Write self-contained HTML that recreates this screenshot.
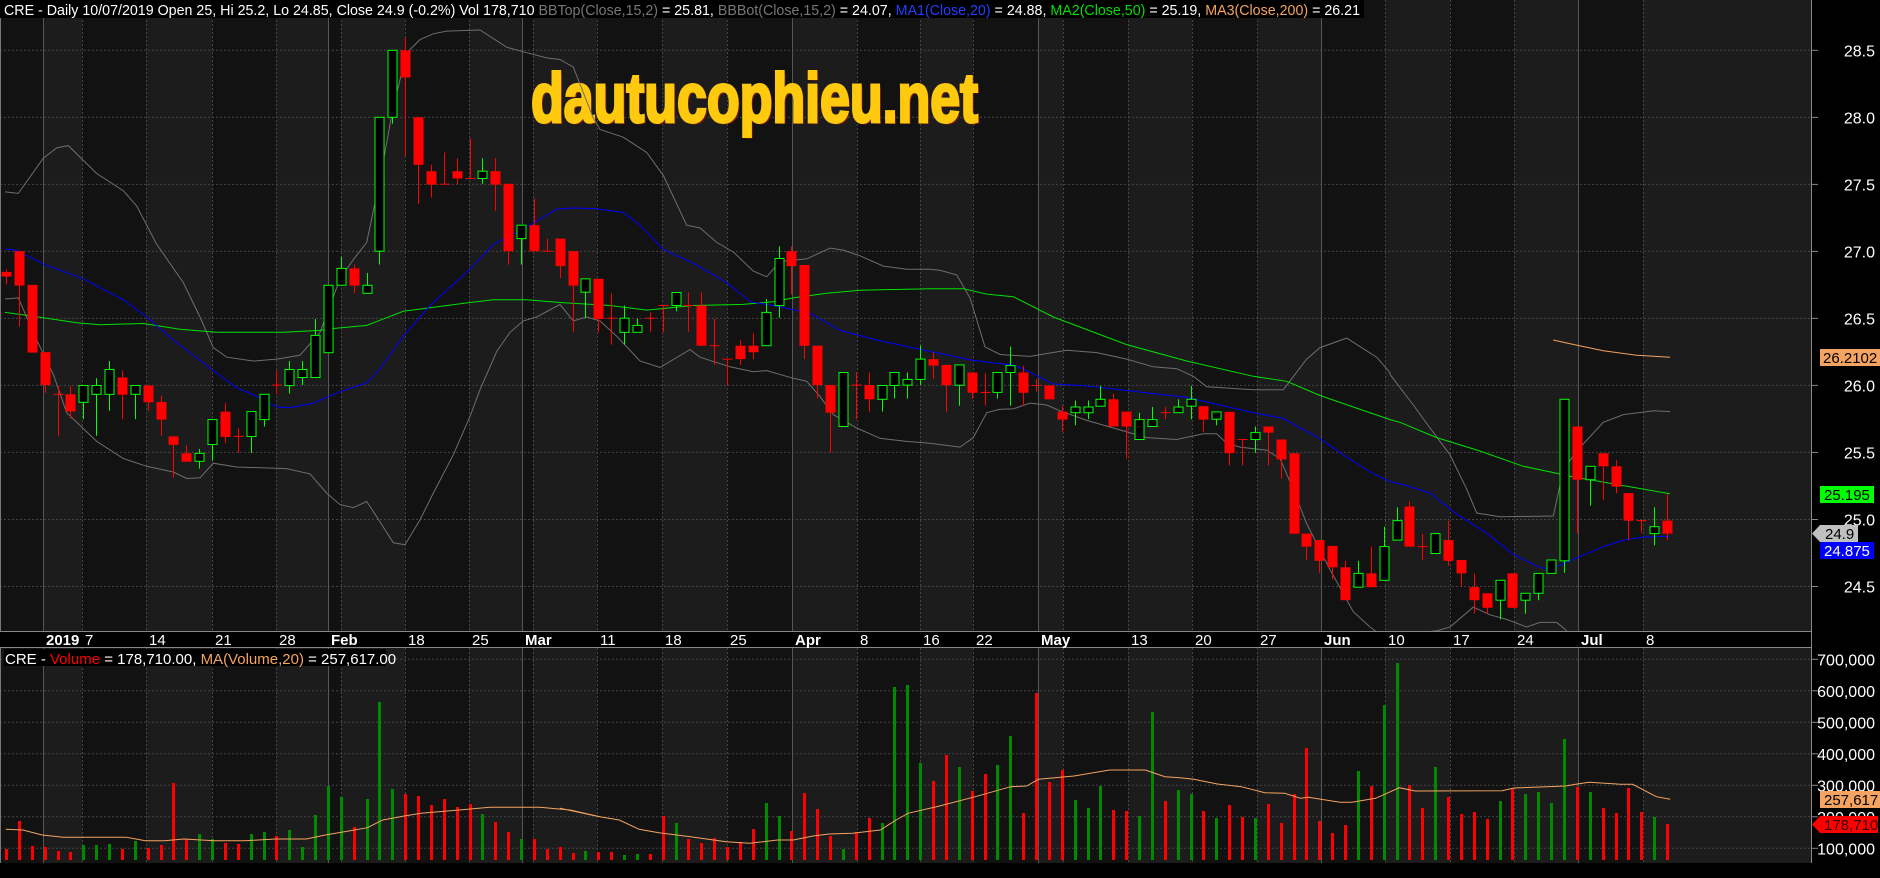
<!DOCTYPE html>
<html><head><meta charset="utf-8">
<style>
html,body{margin:0;padding:0;background:#000;width:1880px;height:878px;overflow:hidden}
svg{display:block}
text{font-family:"Liberation Sans",Arial,sans-serif}
</style></head>
<body>
<div id="c"></div>
<script>
(function(){
var W=1880,H=878,s=[];
function p(x){s.push(x);}
function X(i){return 6+12.876*i;}
function Y(zy){return 30+zy/2.613;}
p('<svg xmlns="http://www.w3.org/2000/svg" width="1880" height="878" viewBox="0 0 1880 878">');
p('<rect width="1880" height="878" fill="#000"/>');
var ticks=[[43,'2019',1,1],[82,'7'],[146,'14'],[212,'21'],[276,'28'],[328,'Feb',1,1],[341,''],[405,'18'],[469,'25'],[522,'Mar',1,1],[533,''],[597,'11'],[662,'18'],[727,'25'],[792,'Apr',1,1],[857,'8'],[920,'16'],[973,'22'],[1038,'May',1,1],[1063,''],[1128,'13'],[1192,'20'],[1257,'27'],[1321,'Jun',1,1],[1385,'10'],[1450,'17'],[1514,'24'],[1578,'Jul',1,1],[1643,'8']];
var bx=[0].concat(ticks.map(function(t){return t[0];})).concat([1811]);
for(var k=0;k<bx.length-1;k++){
 var col=(k%2==0)?'#121212':'#1c1c1c';
 p('<rect x="'+bx[k]+'" y="0" width="'+(bx[k+1]-bx[k])+'" height="631" fill="'+col+'"/>');
 p('<rect x="'+bx[k]+'" y="648" width="'+(bx[k+1]-bx[k])+'" height="215" fill="'+col+'"/>');
}
p('<rect x="1670" y="0" width="141" height="631" fill="#1c1c1c"/><rect x="1670" y="648" width="141" height="215" fill="#1c1c1c"/>');
var py=[[50.3,'28.5'],[117.4,'28.0'],[184.4,'27.5'],[251.4,'27.0'],[318.4,'26.5'],[385.4,'26.0'],[452.4,'25.5'],[519.5,'25.0'],[586.5,'24.5']];
py.forEach(function(g){p('<line x1="0" x2="1811" y1="'+g[0]+'" y2="'+g[0]+'" stroke="#444" stroke-dasharray="2,2"/>');});
var vy=[[659.3,'700,000'],[690.8,'600,000'],[722.3,'500,000'],[753.8,'400,000'],[785.3,'300,000'],[816.8,'200,000'],[848.3,'100,000']];
vy.forEach(function(g){p('<line x1="0" x2="1811" y1="'+g[0]+'" y2="'+g[0]+'" stroke="#444" stroke-dasharray="2,2"/>');});
ticks.forEach(function(t){
 var a=t[3]?'stroke="#555"':'stroke="#444" stroke-dasharray="2,2"';
 p('<line x1="'+(t[0]+.5)+'" x2="'+(t[0]+.5)+'" y1="0" y2="631" '+a+'/>');
 p('<line x1="'+(t[0]+.5)+'" x2="'+(t[0]+.5)+'" y1="648" y2="863" '+a+'/>');
});
p('<line x1="0.5" x2="0.5" y1="0" y2="863" stroke="#777"/>');
p('<text x="533" y="124" textLength="447" lengthAdjust="spacingAndGlyphs" font-size="70" font-weight="bold" fill="#7a1a10" style="font-family:\'Liberation Sans Narrow\',\'Liberation Sans\',sans-serif">dautucophieu.net</text>');
p('<text x="531" y="122" textLength="447" lengthAdjust="spacingAndGlyphs" font-size="70" font-weight="bold" fill="#ffc90e" stroke="#ffc90e" stroke-width="3" style="font-family:\'Liberation Sans Narrow\',\'Liberation Sans\',sans-serif">dautucophieu.net</text>');
function line(arr,ox,sx,oy,sy){return arr.map(function(q){return (ox+q[0]/sx).toFixed(1)+','+(oy+q[1]/sy).toFixed(1);}).join(' ');}
function L(segs,color,w){var all=[];segs.forEach(function(sg){all.push(line(sg[4],sg[0],sg[1],sg[2],sg[3]));});p('<polyline fill="none" stroke="'+color+'" stroke-width="'+(w||1)+'" points="'+all.join(' ')+'"/>');}
p('<defs><clipPath id="cm"><rect x="0" y="18" width="1811" height="613"/></clipPath><clipPath id="cv"><rect x="0" y="648" width="1811" height="215"/></clipPath></defs>');
p('<g clip-path="url(#cm)">');
L([[0,3,30,2.613,[[15,423],[55,427],[130,335],[170,308],[205,302],[290,375],[370,420],[410,460],[470,560],[550,660],[600,750],[640,830],[680,855],[760,865],[830,860],[900,850],[960,790],[1020,650],[1060,600],[1100,555],[1140,390],[1180,200],[1220,60],[1260,25],[1300,10],[1340,3]]],
[460,3,30,2.613,[[60,0],[140,45],[190,57],[260,73],[300,77],[340,97],[400,230],[420,260],[490,280],[560,320],[610,380],[680,510],[720,517],[770,555],[820,580],[880,630],[920,645],[960,605],[1040,598],[1110,570],[1150,575],[1200,590],[1270,617],[1340,625],[1410,625]]],
[920,3,30,2.613,[[60,628],[110,640],[150,700],[195,828],[240,848],[330,853],[440,837],[530,843],[620,860],[700,880],[770,885],[820,905],[860,932],[1000,940],[1090,940],[1160,860],[1200,830],[1280,805],[1370,855],[1410,895]]],
[1370,3,30,2.613,[[60,900],[130,980],[180,1040],[240,1110],[290,1200],[320,1262],[390,1272],[550,1270],[580,1150],[620,1100],[700,1025],[760,1005],[850,995],[900,997]]]],'#6e6e6e');
L([[0,3,30,2.613,[[15,703],[55,700],[110,810],[160,900],[200,1000],[290,1075],[370,1120],[440,1140],[520,1155],[560,1172],[600,1170],[640,1132],[710,1142],[860,1146],[930,1160],[980,1210],[1020,1240],[1060,1248],[1100,1232],[1140,1285],[1180,1340],[1215,1345],[1260,1280],[1300,1210],[1360,1110],[1410,1010]]],
[460,3,30,2.613,[[60,940],[110,840],[150,790],[190,760],[230,750],[300,717],[340,760],[380,750],[420,760],[470,800],[540,865],[600,882],[690,835],[720,855],[810,880],[880,893],[920,890],[1000,910],[1040,918],[1080,958],[1120,1005],[1190,1040],[1260,1067],[1340,1075],[1410,1080]]],
[920,3,30,2.613,[[120,1090],[160,1065],[200,1000],[240,991],[280,990],[330,975],[380,980],[420,995],[500,1020],[600,1045],[680,1065],[770,1070],[850,1055],[890,1055],[920,1080],[960,1090],[1040,1098],[1080,1120],[1110,1180],[1160,1290],[1230,1410],[1300,1520],[1350,1560],[1390,1585]]],
[1370,3,30,2.613,[[200,1570],[240,1560],[310,1508],[360,1528],[410,1540],[470,1560],[510,1548],[560,1548],[590,1570]]]],'#6e6e6e');
L([[0,3,30,2.613,[[15,738],[100,748],[230,765],[300,770],[430,767],[540,782],[650,790],[850,790],[960,785],[1000,780],[1100,772],[1210,735],[1410,712]]],
[460,3,30,2.613,[[100,705],[200,705],[300,712],[450,720],[560,732],[700,720],[850,717],[940,710],[1000,700],[1100,688],[1200,680],[1410,676]]],
[920,3,30,2.613,[[130,676],[200,690],[280,697],[400,750],[620,822],[800,865],[1000,905],[1100,918],[1200,955],[1410,1018]]],
[1370,3,30,2.613,[[90,1025],[200,1065],[330,1100],[460,1140],[560,1158],[580,1163],[900,1212]]]],'#00e000');
L([[0,3,30,2.613,[[15,573],[50,575],[130,612],[250,650],[370,705],[440,750],[520,810],[640,890],[710,935],[790,965],[830,985],[870,987],[940,975],[1020,945],[1100,922],[1140,885],[1210,800],[1290,720],[1410,625]]],
[460,3,30,2.613,[[100,560],[190,520],[290,468],[340,465],[410,467],[490,477],[540,510],[610,573],[700,610],[800,660],[870,710],[940,720],[1050,740],[1140,785],[1250,810],[1410,840]]],
[920,3,30,2.613,[[60,845],[150,862],[220,870],[280,875],[320,890],[400,925],[500,930],[600,940],[700,950],[800,960],[900,980],[1000,1000],[1090,1015],[1130,1035],[1200,1068],[1270,1110],[1350,1155],[1410,1180]]],
[1370,3,30,2.613,[[100,1188],[180,1210],[260,1265],[350,1315],[430,1370],[510,1405],[540,1408],[580,1395],[640,1372],[700,1350],[760,1333],[820,1325],[900,1323]]]],'#0000ff');
L([[1370,3,30,2.613,[[550,810],[600,820],[700,838],[800,850],[900,855]]]],'#f4a460');
var C=[
'R 632 644 625 665','R 578 668 578 775','R 666 843 666 843','R 842 928 842 948','R 952 952 930 1060','R 952 997 930 1015','G 929 973 929 1017','G 929 952 910 1060','G 887 952 865 995','R 908 953 890 1017',
'G 929 952 929 1017','R 929 973 929 995','R 972 1018 955 1060','R 1062 1084 1062 1170','R 1106 1128 1085 1128','G 1106 1127 1095 1146','G 1018 1083 1018 1125','R 997 1063 975 1080','R 1062 1062 1040 1105','G 997 1062 997 1105',
'G 952 1018 952 1036','R 928 928 890 952','G 887 929 865 950','G 887 908 865 928','G 798 908 755 908','G 667 843 667 843','G 623 667 593 667','R 623 668 613 687','G 667 688 635 688','G 228 578 228 613',
'G 53 228 53 245','R 53 124 20 330','R 228 352 228 455','R 369 404 352 438','R 403 403 320 403','R 369 388 335 403','R 388 388 283 388','G 369 388 335 402','R 369 404 335 472','R 402 578 402 613',
'G 510 545 510 613','R 510 578 440 578','R 578 578 545 578','R 545 617 545 648','R 578 668 578 788','G 650 685 650 752','R 650 755 650 790','R 753 753 688 822','G 753 790 720 822','G 772 790 755 790',
'R 753 753 738 788','R 720 720 720 790','G 686 720 686 735','R 720 720 686 788','R 720 825 686 825','R 825 825 755 875','R 860 860 860 928','R 825 860 810 875','R 825 842 792 860','G 738 825 703 825',
'G 597 720 565 752','R 578 617 565 690','R 614 825 614 860','R 825 928 825 963','R 928 1000 928 1105','G 895 1036 895 1036','R 928 928 895 1017','R 928 965 895 997','G 929 965 929 997','G 895 929 895 963',
'G 913 928 895 963','G 860 913 825 928','R 860 877 842 912','R 875 928 875 997','G 875 928 875 982','R 895 948 895 963','R 947 947 897 982','G 895 947 895 963','G 877 895 827 982','R 895 948 877 982',
'R 929 929 912 945','R 929 965 929 965','R 997 1018 982 1050','G 985 1000 968 1033','G 985 1000 968 1017','G 965 983 930 983','R 965 1036 950 1036','R 997 1036 997 1120','G 1018 1070 1000 1070','G 1018 1036 985 1036',
'R 1000 1000 985 1017','G 985 1000 965 1000','G 965 983 930 1017','R 983 1018 983 1050','G 998 1017 998 1033','R 998 1106 998 1138','R 1070 1070 1070 1138','G 1052 1070 1036 1105','R 1036 1052 1036 1138','R 1070 1122 1070 1172',
'R 1106 1316 1106 1316','R 1316 1350 1316 1385','R 1333 1387 1333 1418','R 1348 1404 1348 1435','R 1404 1490 1387 1490','G 1420 1456 1387 1456','R 1420 1456 1350 1456','G 1350 1438 1298 1438','G 1282 1333 1247 1333','R 1245 1350 1232 1350',
'R 1350 1350 1317 1385','G 1316 1368 1316 1368','R 1333 1387 1282 1400','R 1385 1420 1385 1455','R 1456 1490 1420 1525','R 1472 1510 1472 1525','G 1438 1490 1438 1540','R 1420 1510 1420 1510','G 1472 1490 1472 1525','G 1420 1472 1420 1490',
'G 1385 1420 1385 1420','G 965 1387 965 1418','R 1036 1175 1036 1315','G 1140 1175 1140 1243','R 1106 1140 1106 1228','R 1140 1193 1124 1210','R 1210 1282 1210 1333','R 1282 1282 1282 1315','G 1298 1316 1247 1347','R 1282 1316 1213 1333'];
C.forEach(function(c,i){
 var a=c.split(' '),t=a[0],bt=Y(+a[1]),bb=Y(+a[2]),wh=Y(+a[3]),wl=Y(+a[4]);
 var x=Math.round(X(i))+.5;
 var col=t=='R'?'#ff0000':'#00ff00';
 p('<line x1="'+x+'" x2="'+x+'" y1="'+wh.toFixed(1)+'" y2="'+wl.toFixed(1)+'" stroke="'+col+'"/>');
 if(bb-bt<1.5){p('<line x1="'+(x-5)+'" x2="'+(x+5)+'" y1="'+bt.toFixed(1)+'" y2="'+bt.toFixed(1)+'" stroke="'+col+'"/>');}
 else if(t=='R'){p('<rect x="'+(x-5)+'" y="'+bt.toFixed(1)+'" width="10" height="'+(bb-bt).toFixed(1)+'" fill="#ff0000"/>');}
 else{p('<rect x="'+(x-4.5)+'" y="'+(bt).toFixed(1)+'" width="9" height="'+(bb-bt).toFixed(1)+'" fill="#000" stroke="#00ff00"/>');}
});
p('</g>');
var V=[849,821,846,847,851,852,845,845,844,849,841,848,845,783,839,834,839,843,844,834,832,836,830,847,815,786,797,827,799,702,789,794,796,805,799,807,804,814,822,832,839,839,849,847,853,851,852,852,855,854,854,816,823,839,843,838,847,842,829,803,816,831,793,809,836,849,832,818,823,687,685,763,781,755,767,791,774,765,736,813,693,782,770,800,808,786,810,811,816,712,801,790,794,811,818,805,817,818,804,823,794,748,821,833,825,771,786,705,663,785,808,767,797,814,812,819,801,789,794,792,803,739,787,792,808,813,788,812,817,824];
p('<g clip-path="url(#cv)">');
V.forEach(function(v,i){
 var x=Math.round(X(i));var col=C[i][0]=='R'?'#ff0000':'#008a00';
 p('<rect x="'+(x-1)+'" y="'+v+'" width="3" height="'+(860-v)+'" fill="'+col+'"/>');
});
L([[0,2.613,600,3,[[15,688],[60,690],[110,705],[165,712],[330,712],[380,722],[430,722],[480,717],[560,722],[640,722],[720,717],[800,717],[850,705],[900,695],[960,683],[1000,660],[1060,647],[1100,640],[1200,630],[1280,622],[1410,622],[1490,630],[1568,650]]],
[560,2.529,640,3,[[0,505],[100,530],[150,540],[200,568],[250,578],[330,590],[420,605],[480,610],[550,600],[590,600],[640,588],[680,582],[740,580],[810,570],[850,540],[880,520],[960,498],[1050,470],[1140,440],[1180,438],[1210,418],[1300,408],[1390,390],[1480,390],[1530,410],[1568,413]]],
[1170,2.529,640,3,[[60,418],[120,432],[180,440],[240,458],[290,460],[330,475],[350,472],[430,487],[460,487],[520,475],[580,443],[620,453],[840,452],[870,444],[1000,438],[1030,432],[1060,427],[1140,433],[1170,433],[1230,470],[1265,478]]]],'#f4a460');
p('</g>');
p('<rect x="0" y="631" width="1811" height="17" fill="#000"/>');
p('<line x1="0" x2="1811" y1="631.5" y2="631.5" stroke="#888"/><line x1="0" x2="1811" y1="647.5" y2="647.5" stroke="#888"/>');
ticks.forEach(function(t){ if(t[1]) p('<text x="'+(t[0]+3)+'" y="645" font-size="15" fill="#fff"'+(t[2]?' font-weight="bold"':'')+'>'+t[1]+'</text>');});
p('<line x1="1811.5" x2="1811.5" y1="0" y2="863" stroke="#888"/>');
py.forEach(function(g){p('<line x1="1811" x2="1818" y1="'+g[0]+'" y2="'+g[0]+'" stroke="#888"/><text x="1875" y="'+(g[0]+6)+'" font-size="16" fill="#fff" text-anchor="end">'+g[1]+'</text>');});
vy.forEach(function(g){p('<line x1="1811" x2="1818" y1="'+g[0]+'" y2="'+g[0]+'" stroke="#888"/><text x="1875" y="'+(g[0]+6)+'" font-size="16" fill="#fff" text-anchor="end">'+g[1]+'</text>');});
p('<rect x="1820" y="349" width="60" height="17" fill="#f4a460"/><text x="1823" y="363" font-size="15" fill="#000">26.2102</text>');
p('<rect x="1820" y="486" width="54" height="17" fill="#00ff00"/><text x="1824" y="500" font-size="15" fill="#000">25.195</text>');
p('<polygon points="1812,533.5 1820,525 1858,525 1858,542 1820,542" fill="#c0c0c0"/><text x="1825" y="539" font-size="15" fill="#000">24.9</text>');
p('<rect x="1820" y="542" width="54" height="17" fill="#0000ff"/><text x="1824" y="556" font-size="15" fill="#fff">24.875</text>');
p('<rect x="1820" y="791" width="60" height="17" fill="#f4a460"/><text x="1824" y="805" font-size="15" fill="#000">257,617</text>');
p('<polygon points="1812,824.5 1820,816 1878,816 1878,833 1820,833" fill="#ff0000"/><text x="1824" y="830" font-size="15" fill="#300">178,710</text>');
p('<rect x="0" y="0" width="1364" height="18" fill="#000"/>');
p('<text x="4" y="15" font-size="14.5" fill="#fff" textLength="1356" lengthAdjust="spacingAndGlyphs" xml:space="preserve">CRE - Daily 10/07/2019 Open 25, Hi 25.2, Lo 24.85, Close 24.9 (-0.2%) Vol 178,710 <tspan fill="#777">BBTop(Close,15,2)</tspan> = 25.81, <tspan fill="#777">BBBot(Close,15,2)</tspan> = 24.07, <tspan fill="#2040ff">MA1(Close,20)</tspan> = 24.88, <tspan fill="#00e000">MA2(Close,50)</tspan> = 25.19, <tspan fill="#f4a460">MA3(Close,200)</tspan> = 26.21</text>');
p('<rect x="4" y="649" width="382" height="17" fill="#000"/>');
p('<text x="5" y="664" font-size="15" fill="#fff" xml:space="preserve">CRE - <tspan fill="#ff0000">Volume</tspan> = 178,710.00, <tspan fill="#f4a460">MA(Volume,20)</tspan> = 257,617.00</text>');
p('</svg>');
document.getElementById('c').innerHTML=s.join('');
})();
</script>
</body></html>
